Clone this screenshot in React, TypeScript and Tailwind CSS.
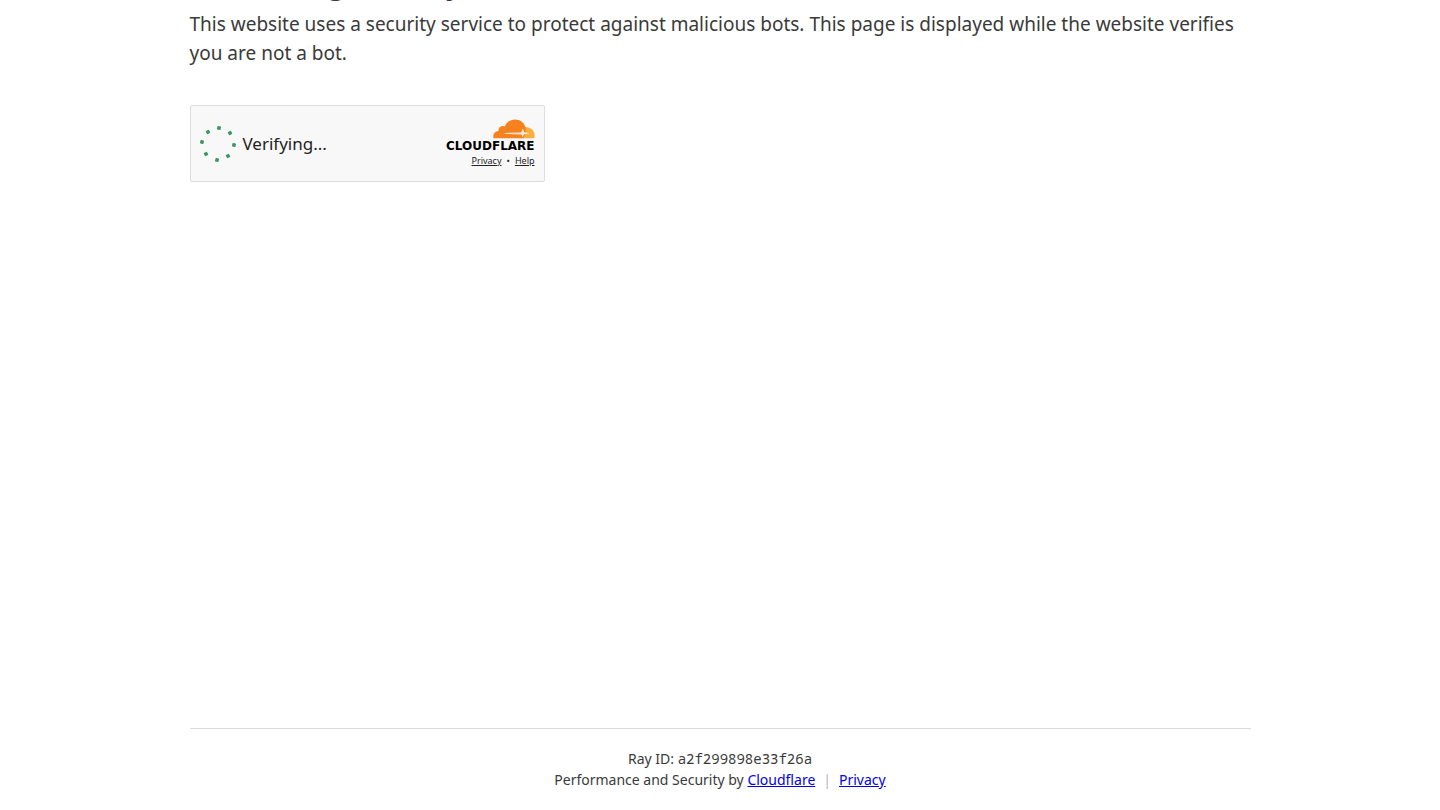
const dots = [
  { cx: 24, cy: 8 },
  { cx: 35, cy: 13 },
  { cx: 39, cy: 25 },
  { cx: 33, cy: 36 },
  { cx: 22, cy: 40 },
  { cx: 11, cy: 34 },
  { cx: 7, cy: 22 },
  { cx: 13, cy: 12 },
];

function Spinner() {
  return (
    <svg viewBox="5 6 36 36" className="w-9 h-9 shrink-0" aria-hidden="true">
      {dots.map((dot, idx) => (
        <rect
          key={idx}
          x={dot.cx - 1.8}
          y={dot.cy - 1.8}
          width="3.6"
          height="3.6"
          rx="0.7"
          fill="#3a9662"
          transform={`rotate(${idx * 45 + 12} ${dot.cx} ${dot.cy})`}
        />
      ))}
    </svg>
  );
}

function CloudLogo() {
  return (
    <svg viewBox="0 0 42 20" className="w-[42px] h-5" aria-hidden="true">
      <path d="M31 8.200c6-.8 10.600 3.200 10.600 8.300 0 1.100-.1 1.900-.3 2.700H28z" fill="#fbad41" />
      <path
        d="M.5 19.200C-.4 15.400 1.900 12.300 5.500 12.100 5 8.200 8.800 6 11.800 7.600 13.400 3 17.500.4 22 .4c5.300 0 9.400 3.300 10.600 8.100l.2 4.500-2.300 6.200z"
        fill="#f6821f"
      />
      <path d="M11.500 14l16.500-.6 1.900-3.800 1.500 3.700 5.300 1-5.500.9-1.900 3-.7-2.800-17.100-.6z" fill="#fff" fillOpacity="0.8" />
    </svg>
  );
}

export default function App() {
  return (
    <div className="min-h-screen flex flex-col overflow-x-hidden bg-white px-6 text-[#3a3a3a] font-['Noto_Sans',sans-serif]">
      <main className="w-full max-w-[1061px] mx-auto flex-1">
        <h1 className="-mt-[38px] mb-1.5 text-[28px] leading-[42px] font-semibold">Performing security verification</h1>
        <p className="text-[19px] leading-[29px]">
          This website uses a security service to protect against malicious bots. This page is displayed while the website verifies you are not a bot.
        </p>

        <div className="mt-[37px] w-[355px] h-[77px] px-[9px] flex items-center justify-between rounded-xs border border-[#dddddd] bg-[#f8f8f8] text-[#232323]">
          <div className="flex items-center gap-[7px]" role="status">
            <Spinner />
            <span className="text-[17px] leading-6">Verifying...</span>
          </div>
          <div className="flex flex-col items-end">
            <CloudLogo />
            <span className="font-['DejaVu_Sans',sans-serif] font-bold text-[12px] leading-[14px] text-black">CLOUDFLARE</span>
            <div className="flex items-center gap-[5px] text-[9px] leading-4">
              <a href="#privacy" className="underline">Privacy</a>
              <span>•</span>
              <a href="#help" className="underline">Help</a>
            </div>
          </div>
        </div>
      </main>

      <footer className="w-full max-w-[1061px] mx-auto pt-[19px] pb-5 border-t border-[#d9d9d9] text-center text-[14px] leading-[21px]">
        <div>
          Ray ID: <code className="font-['Noto_Sans_Mono','DejaVu_Sans_Mono',monospace]">a2f299898e33f26a</code>
        </div>
        <div className="flex justify-center">
          <span>
            Performance and Security by <a href="#cloudflare" className="text-[#0000ee] underline">Cloudflare</a>
          </span>
          <span className="mx-2 text-[#b5b5b5]">|</span>
          <a href="#footer-privacy" className="text-[#0000ee] underline">Privacy</a>
        </div>
      </footer>
    </div>
  );
}
